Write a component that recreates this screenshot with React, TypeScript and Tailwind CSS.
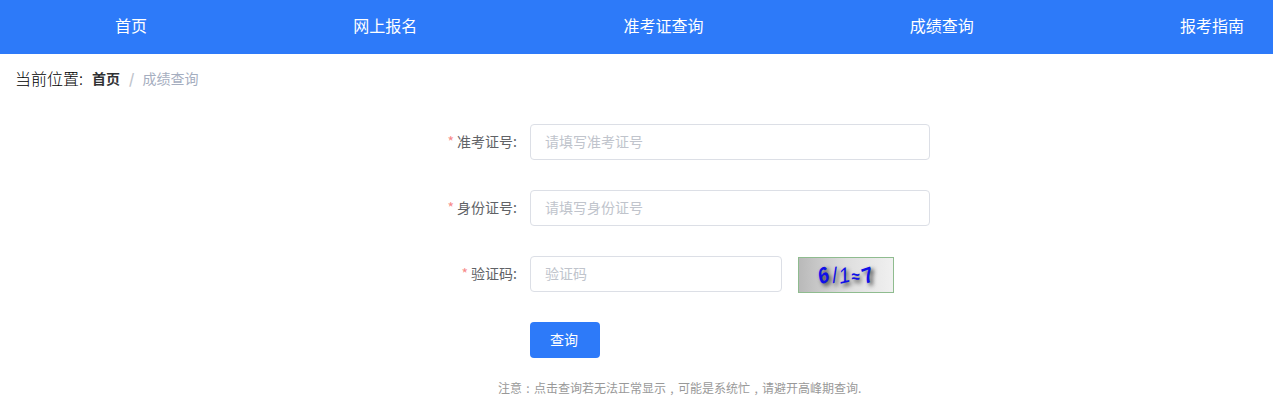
import React from 'react';

const navItems = ['首页', '网上报名', '准考证查询', '成绩查询', '报考指南'];

const Field: React.FC<{ label: string; placeholder: string; inputClass?: string; children?: React.ReactNode }> = ({
  label,
  placeholder,
  inputClass = 'w-[400px]',
  children,
}) => (
  <div className="flex items-center h-9 mb-[30px]">
    <label className="w-[518px] pr-px pb-[2px] text-right text-[14px] text-[#606266] whitespace-nowrap">
      <span className="text-[#f78989] mr-[3px]">*</span>
      {label}:
    </label>
    <input
      placeholder={placeholder}
      readOnly
      className={`${inputClass} ml-3 h-9 rounded border border-[#dcdfe6] bg-white pl-[14px] pr-[15px] pb-[2px] text-[14px] outline-none placeholder:text-[#c0c4cc]`}
    />
    {children}
  </div>
);

const Captcha = () => (
  <div className="ml-4 mt-[2px] flex h-9 w-24 items-center justify-center border border-[#8fbc8f] bg-gradient-to-r from-[#b9b9b9] via-[#dedede] to-[#f0f0f0]">
    <span className="flex scale-y-110 items-center font-['Liberation_Sans',sans-serif] text-[20px] font-bold leading-none text-[#1010e8] [text-shadow:2px_3px_4px_#333]">
      <span className="-rotate-[24deg] -skew-x-12">6</span>
      <span className="ml-[2px] font-normal -rotate-6">/</span>
      <span className="ml-[2px] font-normal -skew-y-12">1</span>
      <span className="ml-[1px] text-[15px]">≈</span>
      <span className="ml-[3px] -rotate-[18deg]">7</span>
    </span>
  </div>
);

// full-width punctuation in the reference sits in the middle of its cell
const Punct: React.FC<{ c: string }> = ({ c }) => <span className="inline-block w-3 text-center">{c}</span>;

export default function App() {
  return (
    <div className="min-h-[414px] bg-white font-['Noto_Sans_CJK_SC','Liberation_Sans',sans-serif]">
      <nav className="flex h-[54px] items-center justify-between bg-[#2d7af9] pl-[115px] pr-[29px] pb-[5px] text-[16px] text-white">
        {navItems.map((item) => (
          <a key={item} className="whitespace-nowrap">
            {item}
          </a>
        ))}
      </nav>

      <div className="flex h-[50px] items-center pl-[15px] pb-[2px]">
        <span className="text-[16px] font-light text-[#000]">当前位置:</span>
        <span className="ml-[9px] text-[14px] font-bold text-[#303133]">首页</span>
        <span className="ml-[9px] mr-2 text-[14px] font-bold text-[#c0c4cc]">/</span>
        <span className="text-[14px] text-[#a5aec0]">成绩查询</span>
      </div>

      <form className="pt-5">
        <Field label="准考证号" placeholder="请填写准考证号" />
        <Field label="身份证号" placeholder="请填写身份证号" />
        <Field label="验证码" placeholder="验证码" inputClass="w-[252px]">
          <Captcha />
        </Field>
        <div className="pl-[530px]">
          <button type="button" className="h-9 w-[70px] rounded bg-[#2d7af9] pr-[2px] pb-[2px] text-[14px] text-white">
            查询
          </button>
        </div>
        <p className="mt-[21px] pl-[498px] text-[12px] leading-[18px] whitespace-nowrap text-[#999]">
          注意<Punct c=":" />点击查询若无法正常显示<Punct c="," />可能是系统忙<Punct c="," />请避开高峰期查询.
        </p>
      </form>
    </div>
  );
}
